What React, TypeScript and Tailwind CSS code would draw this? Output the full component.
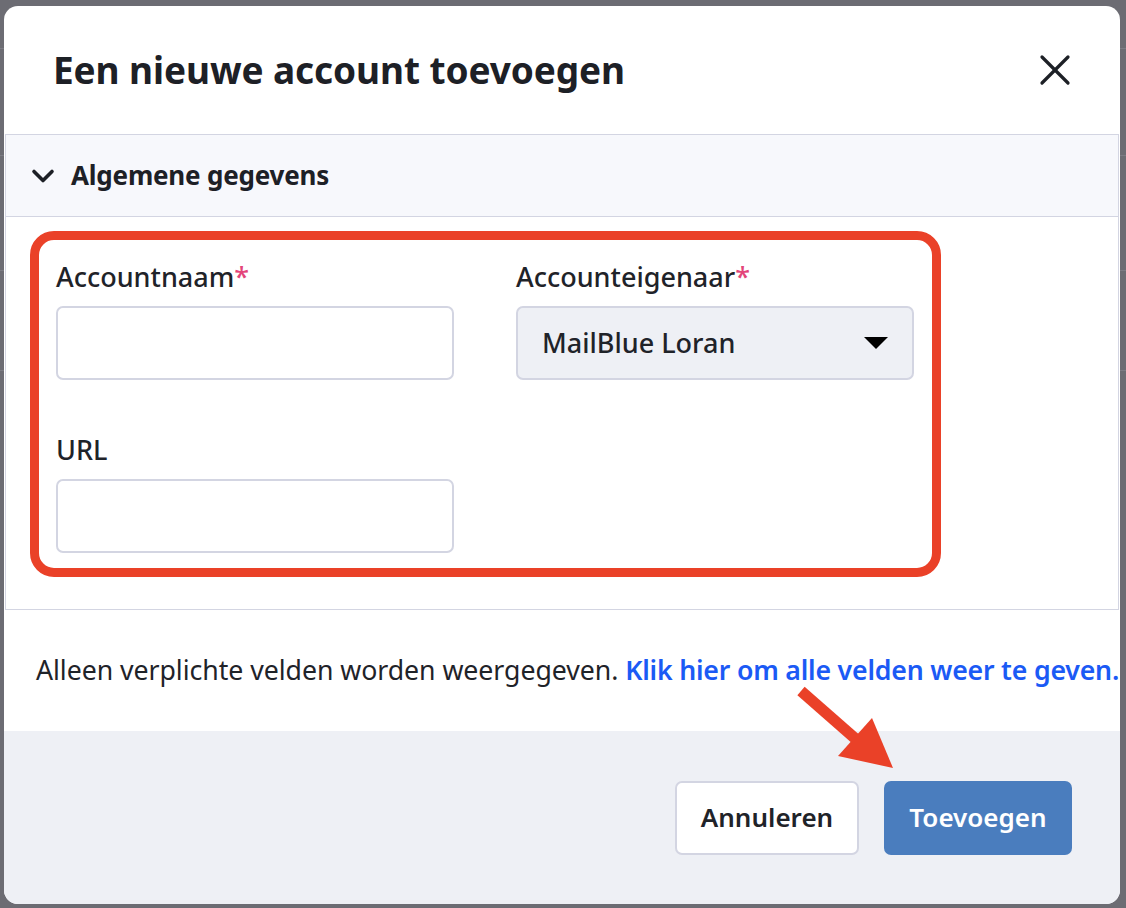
import React from "react";
import { X, ChevronDown } from "lucide-react";

const font = { fontFamily: '"Noto Sans", "Open Sans", sans-serif' };

const Label = ({ text, required }: { text: string; required?: boolean }) => (
  <label className="block h-[30px] mb-[14px] text-[27px] leading-[30px] font-medium text-[#1f2329]">
    {text}
    {required && <span className="text-[#e3457a]">*</span>}
  </label>
);

const App = () => {
  return (
    <div className="relative w-[1126px] h-[908px] overflow-hidden bg-[#6c6c73]" style={font}>
      {/* dimmed page behind the modal */}
      <div className="flex flex-col pt-[48px]">
        <div className="h-[107px] border-t border-[#7c7c84]" />
        <div className="h-[115px] border-t border-[#7c7c84]" />
        <div className="h-[100px] border-t border-[#7c7c84]" />
        <div className="h-[100px] border-t border-[#7c7c84]" />
      </div>

      {/* Modal */}
      <div className="absolute left-[4px] top-[6px] w-[1116px] h-[898px] bg-white rounded-[14px] overflow-hidden flex flex-col">
        {/* Header */}
        <div className="h-[128px] flex items-center justify-between pl-[49px] pr-[39px] shrink-0">
          <h1 className="text-[37px] font-bold text-[#1d2026] tracking-[-0.1px]">
            Een nieuwe account toevoegen
          </h1>
          <X className="w-[52px] h-[52px] text-[#1d2026]" strokeWidth={1.5} />
        </div>

        {/* Section */}
        <div className="mx-[1px] border border-[#d3d5e2] shrink-0">
          <div className="h-[82px] flex items-center gap-[10px] pl-[19px] bg-[#f7f8fc] border-b border-[#d3d5e2]">
            <ChevronDown className="w-[36px] h-[36px] text-[#1d2026]" strokeWidth={2.4} />
            <span className="text-[26px] font-bold text-[#1d2026] tracking-[-0.2px]">Algemene gegevens</span>
          </div>

          <div className="pt-[14px] pb-[32px] pl-[24px]">
            {/* Highlight box */}
            <div className="w-[911px] border-[9px] border-[#ea4128] rounded-[24px] pt-[22px] pl-[17px] pr-[18px] pb-[15px]">
              <div className="grid grid-cols-[398px_398px] gap-x-[62px] gap-y-[55px]">
                <div>
                  <Label text="Accountnaam" required />
                  <div className="h-[74px] rounded-[7px] border-2 border-[#d3d5e2] bg-white" />
                </div>
                <div>
                  <Label text="Accounteigenaar" required />
                  <div className="h-[74px] rounded-[7px] border-2 border-[#d3d5e2] bg-[#eef0f5] flex items-center justify-between pl-[24px] pr-[24px]">
                    <span className="text-[27px] font-medium text-[#1f2329]">MailBlue Loran</span>
                    <svg width="24" height="12" viewBox="0 0 24 12">
                      <path d="M0 0 H24 L12 12 Z" fill="#000" />
                    </svg>
                  </div>
                </div>
                <div>
                  <Label text="URL" />
                  <div className="h-[74px] rounded-[7px] border-2 border-[#d3d5e2] bg-white" />
                </div>
              </div>
            </div>
          </div>
        </div>

        {/* Hint */}
        <div className="h-[121px] flex items-center pl-[32px] whitespace-nowrap text-[26.7px] text-[#1f2329] tracking-[-0.05px] shrink-0">
          Alleen verplichte velden worden weergegeven.&nbsp;
          <span className="text-[#1b5af5] font-semibold tracking-[-0.2px]">Klik hier om alle velden weer te geven.</span>
        </div>

        {/* Footer */}
        <div className="flex-1 bg-[#eef0f5] flex items-center justify-end gap-[25px] pr-[48px]">
          <button className="w-[184px] h-[74px] rounded-[7px] border-2 border-[#d3d5e2] bg-white text-[26px] font-semibold text-[#1f2329]">
            Annuleren
          </button>
          <button className="w-[188px] h-[74px] rounded-[7px] bg-[#4a7dbe] text-[26px] font-semibold text-white">
            Toevoegen
          </button>
        </div>
      </div>

      {/* Red annotation arrow */}
      <svg className="absolute left-0 top-0 pointer-events-none" width="1126" height="908">
        <line x1="801" y1="691" x2="858" y2="741" stroke="#ea4128" strokeWidth="11" />
        <polygon points="838,756 872,718 893,768" fill="#ea4128" />
      </svg>
    </div>
  );
};

export default App;
